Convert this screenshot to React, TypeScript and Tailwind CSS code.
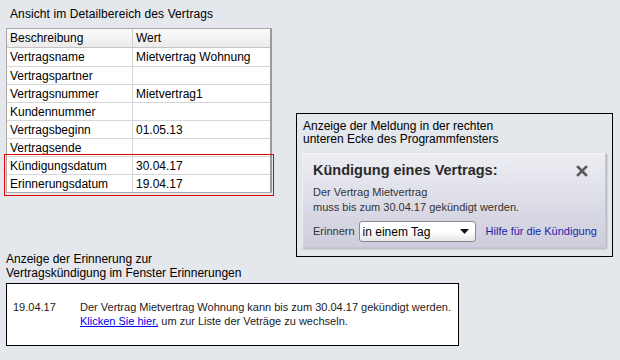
const rows: [string, string][] = [
  ["Vertragsname", "Mietvertrag Wohnung"],
  ["Vertragspartner", ""],
  ["Vertragsnummer", "Mietvertrag1"],
  ["Kundennummer", ""],
  ["Vertragsbeginn", "01.05.13"],
  ["Vertragsende", ""],
  ["Kündigungsdatum", "30.04.17"],
  ["Erinnerungsdatum", "19.04.17"],
];

function CloseIcon() {
  return (
    <svg width="12" height="12" viewBox="0 0 12 12">
      <path d="M2 2 L10 10 M10 2 L2 10" stroke="#5a5a5a" strokeWidth="2.6" strokeLinecap="square" />
    </svg>
  );
}

export default function App() {
  return (
    <div className="relative w-[620px] h-[360px] overflow-hidden bg-[#e4e7ec] text-black font-['Liberation_Sans',Arial,sans-serif]">
      <div className="flex h-[250px] items-start">
        {/* left: detail table */}
        <div className="w-[272px] pl-[6px] pt-[7px]">
          <div className="h-[21px] pl-[4px] text-[12px] leading-[14px] tracking-[0.1px]">Ansicht im Detailbereich des Vertrags</div>
          <div className="border border-[#a8a8a8] border-r-2 border-r-[#9a9a9a] bg-white text-[12px]">
            <div className="flex h-[19px] items-center border-b border-[#c4c4c4] bg-gradient-to-b from-[#fbfbfb] to-[#ebebeb]">
              <div className="w-[126px] pl-[3px] border-r border-[#cfcfcf] h-full flex items-center">Beschreibung</div>
              <div className="pl-[3px]">Wert</div>
            </div>
            {rows.map(([k, v], i) => (
              <div
                key={k}
                className={`flex h-[18px] items-center ${i > 0 ? "border-t border-[#d6d6d6]" : ""}`}
              >
                <div className="w-[126px] pl-[3px] border-r border-[#d6d6d6] h-full flex items-center">{k}</div>
                <div className="pl-[3px]">{v}</div>
              </div>
            ))}
          </div>
        </div>

        {/* right: notification */}
        <div className="ml-[24px] mt-[113px] w-[317px] h-[144px] shrink-0 border border-black px-[5px] pt-[6px]">
          <div className="text-[12px] leading-[13px] pl-[1px]">
            Anzeige der Meldung in der rechten
            <br />
            unteren Ecke des Programmfensters
          </div>
          <div className="mt-[7px] w-[304px] h-[95px] border border-[#c6c6d4] border-t-[#f4f4f8] border-l-[#f0f0f6] bg-gradient-to-b from-[#ededf3] to-[#cdcddd] shadow-[1px_1px_2px_rgba(0,0,0,0.25)] pl-[10px] pr-[4px] pt-[8px]">
            <div className="flex items-center justify-between">
              <div className="text-[14.5px] leading-[17px] font-bold text-[#2a2a2a]">Kündigung eines Vertrags:</div>
              <div className="mr-[13px] mt-[1px]">
                <CloseIcon />
              </div>
            </div>
            <div className="mt-[6px] text-[11px] leading-[15px] text-[#333]">
              Der Vertrag Mietvertrag
              <br />
              muss bis zum 30.04.17 gekündigt werden.
            </div>
            <div className="mt-[6px] flex items-center text-[11px] whitespace-nowrap">
              <span className="text-[#333]">Erinnern</span>
              <div className="ml-[4px] w-[117px] h-[21px] shrink-0 flex items-center justify-between rounded-[3px] border border-[#8a8a8a] bg-gradient-to-b from-white via-white to-[#e6e6e6] pl-[3px] pr-[6px] text-[12px]">
                <span>in einem Tag</span>
                <svg width="9" height="5" viewBox="0 0 9 5">
                  <path d="M0 0 H9 L4.5 5 Z" fill="#111" />
                </svg>
              </div>
              <span className="ml-[10px] text-[#1e1ea8]">Hilfe für die Kündigung</span>
            </div>
          </div>
        </div>
      </div>

      {/* bottom: reminder window */}
      <div className="pl-[6px]">
        <div className="text-[12px] leading-[14px] pt-[2px]">
          Anzeige der Erinnerung zur
          <br />
          Vertragskündigung im Fenster Erinnerungen
        </div>
        <div className="mt-[3px] w-[453px] h-[63px] border border-black bg-white pt-[16px] pl-[6px] text-[11px] leading-[14px] flex">
          <div className="w-[67px] text-[#222]">19.04.17</div>
          <div className="text-[#222]">
            Der Vertrag Mietvertrag Wohnung kann bis zum 30.04.17 gekündigt werden.
            <br />
            <span className="text-[#0000ee] underline">Klicken Sie hier,</span> um zur Liste der Veträge zu wechseln.
          </div>
        </div>
      </div>

      {/* highlight */}
      <div className="absolute left-[4px] top-[154px] w-[270px] h-[42px] border border-[#e00000]" />
    </div>
  );
}
